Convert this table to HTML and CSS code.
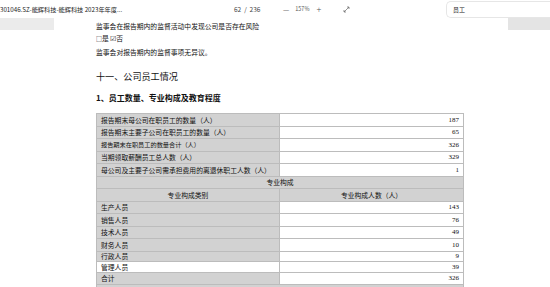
FILE: index.html
```html
<!DOCTYPE html>
<html lang="zh">
<head>
<meta charset="utf-8">
<link rel="stylesheet" href="styles.css">
</head>
<body>
<div class="topbar">
  <span class="title">301046.SZ-能辉科技-能辉科技 2023年年度...</span>
  <span class="pages">62 &nbsp;/&nbsp; 236</span>
  <span class="zoomctl"><span class="minus">—</span><span class="pct">157%</span><span class="plus">+</span></span>
  <span class="fit"><svg width="7" height="7" viewBox="0 0 7 7"><path d="M1 6 L6 1 M4 1 H6 V3 M1 4 V6 H3" fill="none" stroke="#666" stroke-width="0.7"/></svg></span>
  <span class="search">员工</span>
</div>
<div class="shade shade-left"></div>
<div class="shade shade-right"></div>
<main class="doc">
  <p class="line">监事会在报告期内的监督活动中发现公司是否存在风险</p>
  <p class="line"><span class="box">□</span>是 <span class="check">☑</span>否</p>
  <p class="line">监事会对报告期内的监督事项无异议。</p>
  <h1 class="h1">十一、公司员工情况</h1>
  <h2 class="h2">1、员工数量、专业构成及教育程度</h2>
  <div class="tbl">
    <div class="row"><div class="k">报告期末母公司在职员工的数量（人）</div><div class="v">187</div></div>
    <div class="row"><div class="k">报告期末主要子公司在职员工的数量（人）</div><div class="v">65</div></div>
    <div class="row"><div class="k small">报告期末在职员工的数量合计（人）</div><div class="v">326</div></div>
    <div class="row"><div class="k">当期领取薪酬员工总人数（人）</div><div class="v">329</div></div>
    <div class="row"><div class="k">母公司及主要子公司需承担费用的离退休职工人数（人）</div><div class="v">1</div></div>
    <div class="row"><div class="k c span">专业构成</div></div>
    <div class="row"><div class="k c">专业构成类别</div><div class="k c">专业构成人数（人）</div></div>
    <div class="row"><div class="k">生产人员</div><div class="v">143</div></div>
    <div class="row"><div class="k">销售人员</div><div class="v">76</div></div>
    <div class="row"><div class="k">技术人员</div><div class="v">49</div></div>
    <div class="row"><div class="k">财务人员</div><div class="v">10</div></div>
    <div class="row h10"><div class="k">行政人员</div><div class="v">9</div></div>
    <div class="row h11"><div class="k hit">管理人员</div><div class="v">39</div></div>
    <div class="row h12"><div class="k">合计</div><div class="v">326</div></div>
    <div class="row"><div class="k span"></div></div>
  </div>
</main>
</body>
</html>
```
FILE: styles.css
```css
* { box-sizing: border-box; }
html, body { margin: 0; padding: 0; }
body {
  width: 550px;
  height: 287px;
  overflow: hidden;
  background: #fff;
  position: relative;
  font-family: "Noto Sans CJK SC", "Liberation Sans", sans-serif;
  color: #111;
}
.topbar {
  height: 18px;
  display: flex;
  align-items: center;
  font-size: 6.2px;
  color: #222;
  white-space: nowrap;
  position: relative;
}
.title { width: 234px; }
.pages { font-size: 6.5px; width: 49px; color: #444; }
.zoomctl { display: flex; align-items: center; width: 60px; color: #555; }
.minus { font-size: 7px; margin-right: 6px; }
.pct { font-size: 5.5px; margin-right: 7px; }
.plus { font-size: 9px; font-weight: 300; }
.fit { width: 103px; display: flex; }
.search {
  height: 17px;
  flex: 1;
  margin-top: 1px;
  border: 1px solid #e6e6e6;
  border-right: none;
  border-radius: 5px 0 0 5px;
  padding-left: 6px;
  display: flex;
  align-items: center;
  font-size: 6px;
}
.shade { position: absolute; top: 18px; height: 12px; background: #ebebeb; }
.shade-left { left: 0; width: 54px; }
.shade-right { right: 0; width: 42px; background: #e4e4e4; }

.doc { padding-left: 96px; padding-top: 1.5px; }
.line { margin: 0; font-size: 6.8px; line-height: 12.7px; white-space: nowrap; }
.box { font-size: 6px; }
.check { font-size: 7px; }
.h1 {
  margin: 11.5px 0 0;
  font-size: 9.1px;
  line-height: 12px;
  font-weight: 400;
}
.h2 {
  margin: 10px 0 0;
  font-size: 8px;
  line-height: 12px;
  font-weight: 700;
}
.tbl {
  margin-top: 9px;
  width: 368px;
  font-size: 6.8px;
  border-top: 1px solid #bcbcbc;
  border-left: 1px solid #bcbcbc;
}
.row {
  display: grid;
  grid-template-columns: 183px 184px;
  height: 12.5px;
}
.row.h10 { height: 10px; }
.row.h11 { height: 11px; }
.row.h12 { height: 12px; }
.row > div {
  border-right: 1px solid #bcbcbc;
  border-bottom: 1px solid #bcbcbc;
  padding: 0 4px;
  display: flex;
  align-items: center;
  white-space: nowrap;
  overflow: hidden;
  line-height: 8px;
}
.k { background: #d2d2d2; }
.k.small { font-size: 6.2px; }
.k.c { justify-content: center; }
.span { grid-column: 1 / 3; }
.hit { background: #fff; }
.v {
  background: #fff;
  justify-content: flex-end;
  font-family: "Liberation Serif", serif;
  font-size: 7px;
}
```
